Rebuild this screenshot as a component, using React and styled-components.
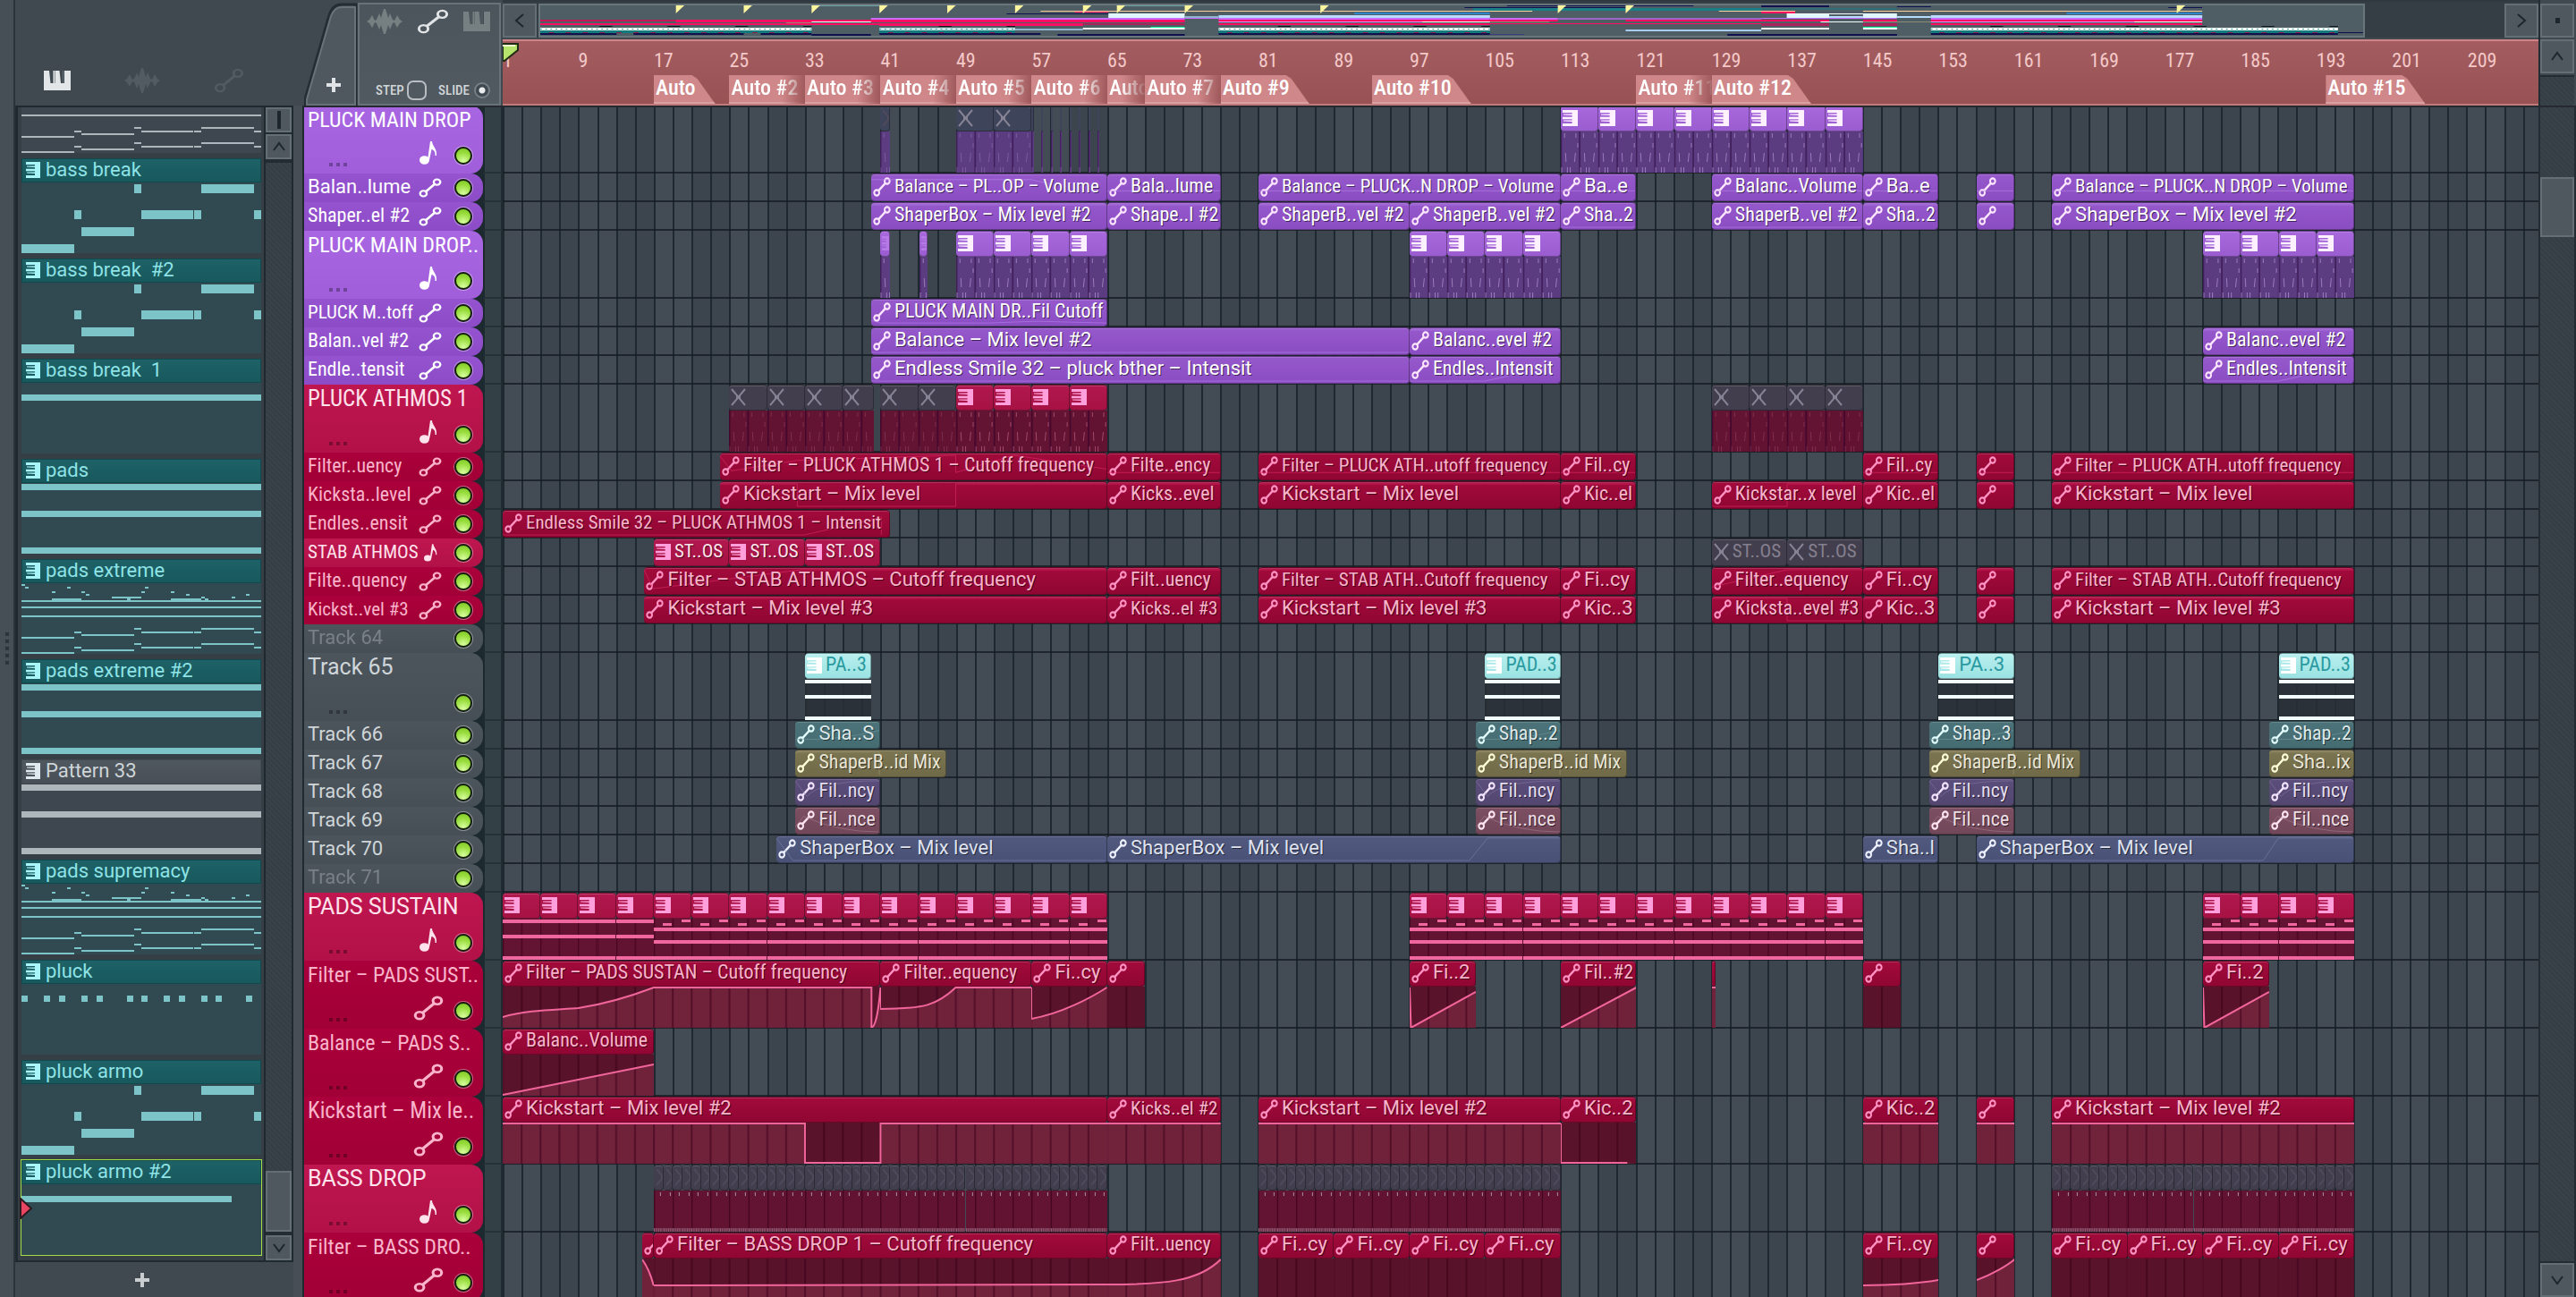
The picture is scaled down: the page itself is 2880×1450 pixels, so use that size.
import React from "react";
import styled, { createGlobalStyle, css } from "styled-components";

const TOTAL_BARS = 215.5;
const BAR_PX = 10.56;
const pct = (bars) => `${(bars / TOTAL_BARS) * 100}%`;

const Global = createGlobalStyle`
  *, *::before, *::after { box-sizing: border-box; }
  body { margin: 0; background: #414950; overflow: hidden; font-family: Roboto, "Liberation Sans", sans-serif; }
  button { font: inherit; color: inherit; background: none; border: 0; padding: 0; display: grid; place-items: center; }
  ul, ol { list-style: none; margin: 0; padding: 0; }
`;

/* ---------- text fitting ---------- */

const estimate = (text, size) => {
  let em = 0;
  for (const c of text) {
    if (/[ijl.I]/.test(c)) em += 0.25;
    else if (/[ftr1 ]/.test(c)) em += 0.33;
    else if (/[mMwW]/.test(c)) em += 0.88;
    else if (/[A-Z]/.test(c)) em += 0.64;
    else em += 0.55;
  }
  return em * size;
};
const CONDENSED = 0.88;
const fit = (text, size, room) => {
  const width = estimate(text, size);
  return { $tight: width > room, $size: width * CONDENSED > room ? size - 1 : size };
};
const family = ({ $tight }) =>
  $tight ? `"Roboto Condensed", Roboto, sans-serif` : `Roboto, "Liberation Sans", sans-serif`;

/* ---------- palettes ---------- */

const themes = {
  purple: { name: "#a966e3, #a05edb", title: "#a768dc, #9a5dd0", text: "#ffffff", icon: "#fff0ff", body: "rgba(97, 58, 140, 0.82)", tick: "#a887c6" },
  violet: { name: "#9553d0, #8c4bc7", title: "#9659cc, #8b4dc2", text: "#ffffff", icon: "#ffe6ff", line: "#b583e8" },
  rose: { name: "#bf1650, #b21147", title: "#b2184e, #a51243", text: "#ffe3ec", icon: "#ff9fdc", body: "rgba(105, 10, 44, 0.84)", tick: "#b05578" },
  crimson: { name: "#ab003b, #a10036", title: "#a20b3c, #900633", text: "#f9b4cb", icon: "#ff93c4", body: "rgba(92, 12, 38, 0.88)", line: "#e02d6c" },
  grey: { name: "#4c555c, #474f56", title: "#b9efef, #9be2e2", text: "#cfd6da", icon: "#ffffff", body: "rgba(40, 47, 54, 0.86)" },
  teal: { title: "#4b7379, #456c71", text: "#dde9ea", icon: "#e4ffff", line: "#74999e" },
  olive: { title: "#7c7551, #716a48", text: "#e8e5d5", icon: "#ffffd8", line: "#9c9673" },
  indigo: { title: "#5b4e7c, #53466f", text: "#e4deee", icon: "#f3e4ff", line: "#8377a3" },
  mauve: { title: "#7c4f62, #724759", text: "#eedfe5", icon: "#ffe4f2", line: "#a57d8d" },
  slate: { title: "#51597f, #495176", text: "#dfe2ef", icon: "#eef1ff", line: "#7b84ab" },
};

/* ---------- icons ---------- */

const AutomationIcon = ({ w = 20, h = 22, c = "currentColor", s = 2.4 }) => (
  <svg width={w} height={h} viewBox="0 0 24 24" preserveAspectRatio="none" fill="none" stroke={c} strokeWidth={s} aria-hidden="true">
    <circle cx="5" cy="19" r="3.4" />
    <circle cx="19" cy="5" r="3.4" />
    <path d="M7.5 16.5 16.5 7.5" strokeWidth={s + 0.4} />
  </svg>
);
const KeysIcon = ({ w = 30, h = 22, c = "currentColor" }) => (
  <svg width={w} height={h} viewBox="0 0 30 22" preserveAspectRatio="none" fill={c} aria-hidden="true">
    <path d="M0 0H6L7.500 14H10.500V0H12.500V14H13V0H17.500L19 14H21.500V0H30V22H0Z" />
    <path d="M21.500 0H23V14H21.500Z" fill="#414950" />
  </svg>
);
const PatternIcon = ({ w = 16, h = 18, c = "currentColor" }) => (
  <svg width={w} height={h} viewBox="0 0 16 18" preserveAspectRatio="none" fill={c} aria-hidden="true">
    <path d="M0 0H16V18H0V15H10V13L1 12.500V11.500H10V10.300H0V7.700H10V6L1 5.500V4.500H10V3H0Z" />
  </svg>
);
const WaveIcon = ({ w = 40, h = 28 }) => (
  <svg width={w} height={h} viewBox="0 0 40 28" fill="currentColor" aria-hidden="true">
    <path d="M0 14 3 12 6 7 9 13 11 12 14 5 16 10 19 0H21L24 10 26 5 29 12 31 13 34 7 37 12 40 14 37 16 34 21 31 15 29 16 26 23 24 18 21 28H19L16 18 14 23 11 16 9 15 6 21 3 16Z" />
  </svg>
);
const NoteIcon = ({ w = 20, h = 26 }) => (
  <svg width={w} height={h} viewBox="0 0 20 26" fill="currentColor" aria-hidden="true">
    <ellipse cx="5.500" cy="21" rx="5.500" ry="4.800" />
    <path d="M9 21 12 0H14C14 5 20 8 19 16L17.500 16C18 11 15 9 13.500 9L11 21Z" />
  </svg>
);
const CrossIcon = ({ c = "#858394" }) => (
  <svg width="17" height="20" viewBox="0 0 17 20" fill="none" stroke={c} strokeWidth="2" aria-hidden="true">
    <path d="M1 1 7 8V12L1 19M16 1 10 8V12L16 19M7 8 10 12M10 8 7 12" />
  </svg>
);
const PlusIcon = () => (
  <svg width="16" height="16" viewBox="0 0 16 16" fill="currentColor" aria-hidden="true">
    <path d="M6 0H10V6H16V10H10V16H6V10H0V6H6Z" />
  </svg>
);
const Chevron = ({ d }) => (
  <svg width="18" height="18" viewBox="0 0 18 18" fill="none" stroke="#1d262c" strokeWidth="2" aria-hidden="true">
    <path d={d} />
  </svg>
);
const UP = "M3 13 9 5 15 13";
const DOWN = "M3 5 9 13 15 5";
const LEFT = "M13 2 5 9 13 16";
const RIGHT = "M5 2 13 9 5 16";

/* ---------- shell ---------- */

const Shell = styled.div`
  display: grid;
  grid-template-columns: 17px 311px 12px minmax(0, 1fr);
  height: 100vh;
  background: #414950;
`;
const Edge = styled.div`
  display: flex;
  flex-direction: column;
  justify-content: center;
  align-items: center;
  gap: 4px;
  background: #464e56;
  border-right: 2px solid #2b343b;
  i { width: 4px; height: 4px; background: #2c3339; }
`;
const Gutter = styled.div`
  margin-top: 118px;
  background: #474e56;
  border-right: 2px solid #1f2930;
`;
const Bevel = styled.button`
  background: #4f585f;
  border: 2px solid #646e75;
  flex: none;
`;
const ScrollTrack = styled.div`
  flex: 1;
  display: flex;
  flex-direction: column;
  justify-content: ${(p) => p.$end || "flex-start"};
  background: repeating-linear-gradient(45deg, #363e45 0 2px, #3a4249 2px 4px);
  border-top: 2px solid #222c32;
  border-bottom: 2px solid #222c32;
`;

/* ---------- pattern browser ---------- */

const Browser = styled.aside`
  display: flex;
  flex-direction: column;
  min-height: 0;
`;
const BrowserTabs = styled.nav`
  display: flex;
  align-items: flex-end;
  gap: 60px;
  height: 118px;
  padding: 0 0 14px 32px;
  color: #525b61;
  button { height: 28px; }
  button:first-child { color: #e3e6e8; }
`;
const BrowserBody = styled.div`
  flex: 1;
  display: flex;
  min-height: 0;
  border: 2px solid #1f2930;
  border-left-width: 3px;
`;
const PatternList = styled.ul`
  flex: 1;
  display: flex;
  flex-direction: column;
  justify-content: flex-end;
  gap: 6px;
  min-width: 0;
  overflow: hidden;
  padding: 0 3px 6px 4px;
  background: #363e46;
`;
const Pattern = styled.li`
  flex: none;
  position: relative;
  background: ${(p) => (p.$grey ? "#3e464f" : "#314a51")};
  color: ${(p) => (p.$grey ? "#adb6bb" : "#7cc4c8")};
  ${(p) => p.$selected && css`box-shadow: 0 0 0 1px #a4dc45;`}
`;
const PatternTitle = styled.div`
  display: flex;
  align-items: center;
  gap: 6px;
  height: 27px;
  padding: 0 0 2px 4px;
  font-size: 22px;
  line-height: 26px;
  color: ${(p) => (p.$grey ? "#ced5d9" : "#8ee3e6")};
  background: ${(p) => (p.$grey ? "linear-gradient(#50585f, #484f56)" : "linear-gradient(#1e6166, #17595d)")};
  border: 1px solid ${(p) => (p.$grey ? "#444c53" : "#0f4a4e")};
  white-space: pre;
`;
const Preview = styled.svg`
  display: block;
  width: 100%;
  height: 79px;
`;
const PlayArrow = styled.svg`
  position: absolute;
  left: -2px;
  bottom: 40px;
`;
const BrowserScroll = styled.div`
  width: 31px;
  display: flex;
  flex-direction: column;
  border-left: 2px solid #1f2930;
  background: #222c32;
  gap: 2px;
  ${Bevel} { height: 28px; }
  ${ScrollTrack} ${Bevel} { height: 68px; }
`;
const AddPattern = styled.button`
  height: 39px;
  margin-right: 28px;
  color: #c9cdd0;
`;

const bassNotes = [[0, 69, 59, 10], [59, 31, 8, 10], [67, 50, 59, 10], [126, 2, 8, 10], [134, 31, 59, 10], [194, 31, 8, 10], [202, 2, 59, 10], [261, 31, 8, 10]];
const chord = [[0, 1, 269, 7], [0, 31, 269, 7], [0, 72, 269, 7]];
const chordSplit = [1, 31, 72].flatMap((y) => [[0, y, 134, 7], [135, y, 134, 7]]);
const extreme = [
  ...[[0, 1], [4, 4], [34, 9], [51, 4], [67, 9], [72, 12], [135, 9], [139, 4], [168, 9], [185, 12], [202, 15], [206, 17], [236, 15], [252, 12], [118, 17]].map(([x, y]) => [x, y, 4, 2]),
  [34, 17, 33, 2], [101, 15, 33, 2], [168, 17, 34, 2],
  ...[19, 26, 36].flatMap((y) => [[0, y, 134, 2], [135, y, 134, 2]]),
  ...[0, 17].flatMap((d) => [[0, 60 + d, 59, 2], [59, 54 + d, 8, 2], [67, 57 + d, 59, 2], [126, 50 + d, 8, 2], [134, 54 + d, 59, 2], [194, 54 + d, 8, 2], [202, 50 + d, 59, 2], [261, 54 + d, 8, 2]]),
];
const pluckNotes = [0, 25, 42, 67, 84, 118, 135, 160, 177, 202, 218, 252].map((x) => [x, 13, 7, 7]);
const patterns = [
  { notes: extreme, grey: true },
  { name: "bass break", notes: bassNotes },
  { name: "bass break  #2", notes: bassNotes },
  { name: "bass break  1", notes: [[0, 13, 269, 7]] },
  { name: "pads", notes: chord },
  { name: "pads extreme", notes: extreme },
  { name: "pads extreme #2", notes: chordSplit },
  { name: "Pattern 33", notes: chordSplit, grey: true },
  { name: "pads supremacy", notes: extreme },
  { name: "pluck", notes: pluckNotes },
  { name: "pluck armo", notes: bassNotes },
  { name: "pluck armo #2", notes: [[0, 13, 236, 7]], selected: true },
];

function PatternBrowser() {
  return (
    <Browser>
      <BrowserTabs>
        <button aria-label="Patterns"><KeysIcon /></button>
        <button aria-label="Audio"><WaveIcon /></button>
        <button aria-label="Automation"><AutomationIcon w={34} h={28} s={2} /></button>
      </BrowserTabs>
      <BrowserBody>
        <PatternList>
          {patterns.map((p, i) => (
            <Pattern key={i} $grey={p.grey} $selected={p.selected}>
              {p.name && (
                <PatternTitle $grey={p.grey}>
                  <PatternIcon c={p.grey ? "#dfe9f0" : "#a9f6fa"} />
                  {p.name}
                </PatternTitle>
              )}
              <Preview viewBox="0 0 269 79" preserveAspectRatio="none" fill="currentColor" shapeRendering="crispEdges">
                {p.notes.map(([x, y, w, h], n) => <rect key={n} x={x} y={y} width={w} height={h} />)}
              </Preview>
              {p.selected && (
                <PlayArrow width="15" height="24" viewBox="0 0 15 24"><path d="M1 1 13 12 1 23Z" fill="#ea4663" stroke="#2b1a20" strokeWidth="2" /></PlayArrow>
              )}
            </Pattern>
          ))}
        </PatternList>
        <BrowserScroll>
          <Bevel aria-label="Lock">
            <svg width="4" height="20"><rect width="4" height="20" fill="#1d262c" /></svg>
          </Bevel>
          <Bevel aria-label="Scroll up"><Chevron d={UP} /></Bevel>
          <ScrollTrack $end="flex-end"><Bevel as="div" /></ScrollTrack>
          <Bevel aria-label="Scroll down"><Chevron d={DOWN} /></Bevel>
        </BrowserScroll>
      </BrowserBody>
      <AddPattern aria-label="Add pattern"><PlusIcon /></AddPattern>
    </Browser>
  );
}

/* ---------- playlist header ---------- */

const Playlist = styled.main`
  display: flex;
  flex-direction: column;
  min-height: 0;
  min-width: 0;
`;
const Head = styled.header`
  flex: none;
  display: grid;
  grid-template-columns: 222px minmax(0, 1fr) 42px;
  grid-template-rows: 44px 74px;
  height: 120px;
  border-bottom: 2px solid #26292f;
`;
const Tools = styled.div`
  grid-row: 1 / 3;
  display: grid;
  grid-template-columns: 60px 1fr;
  padding-top: 3px;
`;
const AddTrack = styled.button`
  position: relative;
  color: #e1e4e6;
  padding: 68px 0 0 6px;
  > svg:first-child { position: absolute; inset: 0; width: 100%; height: 100%; }
  > svg:last-child { position: relative; }
`;
const ToolBox = styled.div`
  display: flex;
  flex-direction: column;
  justify-content: space-between;
  background: linear-gradient(#4c555c, #525a61);
  border: 2px solid #68727a;
  margin-right: 2px;
  padding: 5px 10px 4px 8px;
`;
const ToolRow = styled.div`
  display: flex;
  align-items: center;
  justify-content: space-between;
  color: #767f81;
  button:nth-child(2) { color: #e1e4e6; }
`;
const OptionRow = styled(ToolRow)`
  padding-left: 10px;
`;
const Option = styled.label`
  display: flex;
  align-items: center;
  gap: 3px;
  font: 500 15px/20px "Roboto Condensed", Roboto, sans-serif;
  color: #d0d5d8;
`;
const StepBox = styled.input`
  appearance: none;
  margin: 0;
  width: 22px;
  height: 22px;
  border: 2px solid #b8bec2;
  border-radius: 7px;
`;
const SlideDot = styled.input`
  appearance: none;
  margin: 0 0 0 2px;
  width: 18px;
  height: 18px;
  border: 2px solid #767f85;
  border-radius: 50%;
  background: radial-gradient(circle, #e9ecee 0 3px, #3f484f 4px);
`;

function HeadTools() {
  return (
    <Tools>
      <AddTrack aria-label="Add">
        <svg viewBox="0 0 60 115" preserveAspectRatio="none" aria-hidden="true">
          <path d="M1 115V108L28 14Q32 2 42 2H58V115Z" fill="#4f585f" stroke="#242d34" strokeWidth="3" />
          <path d="M3 115V108L30 15Q34 5 42 5H57V114H3" fill="none" stroke="#68727a" strokeWidth="2" />
        </svg>
        <PlusIcon />
      </AddTrack>
      <ToolBox>
        <ToolRow>
          <button aria-label="Audio clips"><WaveIcon /></button>
          <button aria-label="Automation clips"><AutomationIcon w={36} h={28} s={2} /></button>
          <button aria-label="Pattern clips"><KeysIcon /></button>
        </ToolRow>
        <OptionRow>
          <Option>STEP<StepBox type="checkbox" /></Option>
          <Option>SLIDE<SlideDot type="radio" /></Option>
        </OptionRow>
      </ToolBox>
    </Tools>
  );
}

const MapRow = styled.div`
  display: flex;
  gap: 2px;
  height: 42px;
  padding-top: 2px;
  background: #353e45;
  border-top: 2px solid #30393f;
  ${Bevel} { width: 38px; }
`;
const MapTrack = styled.div`
  flex: 1;
  display: flex;
`;
const MapWindow = styled.div`
  flex: 0 0 93%;
  background: #4f5e65;
  border: 2px solid #68757b;
  svg { display: block; width: 100%; height: 34px; }
`;

const P = "#c96bff", R = "#ff0f62", W = "#f4fffc", T = "#157a7c", N = "#10104e", LB = "#b8dcff", PE = "#ffcf9a", BL = "#2e86c8", G = "#19ffa0", M = "#a8245a", DT = "#1b7f86", K = "#101820", MIST = "#dff6ff", KHAKI = "#8f8a74";
const mapBands = [
  [1, 17, 16, 2, "#c01a58"], [1, 65, 20, 2, R], [17, 65, 16, 3, R], [65, 77, 16, 3, R],
  [1, 33, 25, 3, W], [1, 33, 28, 3, T], [1, 10, 31, 2, N], [12, 25, 31, 2, N], [27, 33, 31, 2, N], [33, 40, 32, 2, N],
  [33, 40, 18, 1, W], [30, 33, 19, 1, KHAKI], [40, 77, 14, 2, P], [41, 65, 20, 3, R],
  [41, 57, 25, 3, "#c9e6e6"], [41, 57, 28, 3, T], [41, 60, 31, 2, N], [57, 65, 26, 2, "#8fb4d0"], [62, 77, 32, 2, N],
  [65, 77, 20, 2, M], [65, 77, 25, 2, W], [73, 77, 24, 1, G], [68, 77, 9, 5, MIST], [60, 81, 6, 1, PE], [64, 68, 7, 1, R], [56, 68, 9, 1, N], [33, 41, 0, 1, "#6fa5a8"], [69, 77, 0, 1, "#6fa5a8"],
  [81, 113, 6, 1, PE], [97, 113, 8, 2, BL], [81, 113, 11, 3, LB], [81, 113, 14, 2, P], [81, 113, 16, 2, R], [81, 113, 18, 1, "#e090ff"], [81, 113, 20, 2, R], [105, 113, 18, 1, W],
  [81, 113, 25, 3, W], [81, 113, 28, 3, T], [81, 113, 31, 2, N], [113, 117, 32, 1, "#3b3f80"], [77, 81, 12, 2, "#8fb4d0"], [77, 81, 14, 1, P],
  [111, 145, 3, 3, DT], [110, 129, 2, 1, N], [115, 137, 0, 1, N], [113, 118, 6, 1, PE], [113, 121, 14, 2, P], [121, 145, 14, 2, "#9a67c8"], [113, 121, 16, 2, R], [129, 145, 16, 2, R], [113, 145, 20, 1, R], [129, 145, 27, 2, "#a9cdee"], [113, 120, 18, 1, KHAKI],
  [145, 153, 0, 2, N], [145, 161, 3, 2, "#2f6f75"], [140, 149, 6, 1, PE], [145, 149, 7, 2, R], [148, 157, 9, 1, W], [148, 153, 10, 4, MIST], [145, 161, 14, 1, P], [145, 153, 16, 2, R], [145, 153, 20, 3, M], [145, 153, 25, 2, W], [141, 161, 32, 2, N], [153, 157, 12, 2, LB], [152, 157, 18, 1, W],
  [157, 165, 6, 1, PE], [157, 161, 9, 5, MIST], [157, 161, 16, 2, R], [157, 161, 20, 3, M], [157, 161, 24, 1, G], [157, 161, 25, 2, W], [161, 165, 12, 2, LB], [157, 168, 18, 1, KHAKI], [161, 165, 1, 1, N],
  [165, 197, 6, 1, PE], [181, 197, 8, 2, BL], [165, 197, 11, 3, LB], [165, 197, 14, 2, P], [165, 197, 16, 2, R], [165, 197, 18, 1, "#e090ff"], [165, 197, 20, 2, R], [189, 197, 18, 1, W],
  [165, 213, 25, 3, W], [165, 213, 28, 3, T], [165, 213, 31, 2, N], [213, 216, 30, 1, N], [193, 197, 2, 1, N],
];
const mapDots = [[1, 33], [41, 57], [81, 113], [165, 213]];
const mapMarks = [17, 25, 33, 41, 49, 57, 65, 69, 77, 93, 121, 129, 194];

function MiniMap() {
  return (
    <MapRow>
      <Bevel aria-label="Scroll left"><Chevron d={LEFT} /></Bevel>
      <MapTrack>
        <MapWindow>
          <svg viewBox="1 0 215 34" preserveAspectRatio="none" aria-hidden="true">
            {mapBands.map(([a, b, y, h, c], i) => <rect key={i} x={a} y={y} width={b - a} height={h} fill={c} />)}
            {mapDots.map(([a, b]) => (
              <g key={a} strokeWidth="1">
                <path d={`M${a} 26.500H${b}`} stroke="#3b8f90" strokeDasharray="0.2 0.4" />
                <path d={`M${a + 7} 23.500H${b}`} stroke={K} strokeDasharray="1.5 6.5" />
                <path d={`M${a + 1} 30.500H${b}`} stroke="#8c1f4c" strokeDasharray="0.6 1.4" />
              </g>
            ))}
            {mapMarks.map((m) => <path key={m} d={`M${m} 0h1l-1 9z`} fill="#fff6a0" />)}
          </svg>
        </MapWindow>
      </MapTrack>
      <Bevel aria-label="Scroll right"><Chevron d={RIGHT} /></Bevel>
    </MapRow>
  );
}

const Corner = styled.div`
  grid-row: 1 / 3;
  grid-column: 3;
  display: flex;
  flex-direction: column;
  gap: 2px;
  padding: 4px 2px 0 2px;
  background: linear-gradient(#222c32, #222c32) left / 2px 100% no-repeat;
  ${Bevel} { height: 38px; }
  ${ScrollTrack} { border-bottom: 0; }
`;
const Ruler = styled.div`
  grid-column: 2;
  position: relative;
  overflow: hidden;
  background: linear-gradient(#a35d60, #985254);
  border-top: 2px solid #cf8486;
  border-bottom: 2px solid #c07a7b;
`;
const RulerNumber = styled.span`
  position: absolute;
  top: 10px;
  font: 22px/24px "Roboto Condensed", Roboto, sans-serif;
  color: #f5c9c9;
`;
const Marker = styled.span`
  position: absolute;
  bottom: 0;
  height: 32px;
  padding: 0 22px 0 2px;
  overflow: hidden;
  white-space: nowrap;
  font: 500 24px/28px "Roboto Condensed", Roboto, sans-serif;
  color: #fff;
  background: #cf8789;
  border-bottom: 2px solid #dba0a0;
  ${(p) =>
    p.$cut
      ? css`padding-right: 0; mask-image: linear-gradient(90deg, #000 calc(100% - 26px), rgba(0, 0, 0, 0.1));`
      : css`clip-path: polygon(0 0, calc(100% - 26px) 0, calc(100% - 20px) 4px, 100% 100%, 0 100%);`}
`;
const PlayHead = styled.svg`
  position: absolute;
  left: 0;
  top: 2px;
`;
const markers = [
  [17, "Auto"], [25, "Auto #2", 8], [33, "Auto #3", 8], [41, "Auto #4", 8], [49, "Auto #5", 8], [57, "Auto #6", 8],
  [65, "Auto", 4], [69, "Auto #7", 8], [77, "Auto #9"], [93, "Auto #10"], [121, "Auto #11", 8], [129, "Auto #12"], [194, "Auto #15"],
];
const numbers = Array.from({ length: 27 }, (_, i) => 1 + i * 8);

/* ---------- tracks ---------- */

const TrackArea = styled.div`
  flex: 1;
  display: flex;
  min-height: 0;
`;
const Stage = styled.div`
  flex: 1;
  position: relative;
  min-width: 0;
  overflow: hidden;
  display: flex;
  flex-direction: column;
  background: #1c2a30;
`;
const GridLines = styled.div`
  position: absolute;
  inset: 0 0 0 222px;
  display: flex;
  overflow: hidden;
  background: #424a53;
`;
const GridCell = styled.i`
  flex: 0 0 ${pct(2)};
  border-left: 2px solid #1e2831;
  background: #434b54;
  &:nth-child(4n + 3), &:nth-child(4n + 4) { background: #3c454d; }
`;
const Tracks = styled.ol`
  position: relative;
  margin-top: -2px;
`;
const Track = styled.li`
  display: grid;
  grid-template-columns: 200px 22px minmax(0, 1fr);
  height: ${(p) => (p.$tall ? 76 : 32)}px;
`;
const Title = styled.strong`
  font-weight: 400;
  font-family: ${family};
  font-size: ${(p) => p.$size}px;
  line-height: 28px;
  white-space: nowrap;
  opacity: ${(p) => (p.$dim ? 0.35 : 1)};
`;
const Led = styled.input`
  appearance: none;
  margin: 0;
  justify-self: center;
  grid-column: 3;
  width: 20px;
  height: 20px;
  border-radius: 50%;
  border: 2px solid #14210e;
  background: radial-gradient(circle at 50% 90%, #d9ffa0, #97dc3b 60%, #7cc625);
  box-shadow: 0 0 0 1px rgba(255, 255, 255, 0.4);
`;
const Grip = styled.i`
  align-self: end;
  display: flex;
  gap: 4px;
  padding: 0 0 8px 24px;
  &::before, &::after, b { content: ""; width: 4px; height: 4px; background: rgba(0, 0, 0, 0.3); }
`;
const TrackName = styled.div`
  display: grid;
  grid-template-columns: minmax(0, 1fr) 30px 44px;
  align-items: center;
  padding-left: 4px;
  border-radius: 0 14px 14px 0;
  color: ${(p) => themes[p.$tone].text};
  background: linear-gradient(${(p) => themes[p.$tone].name});
  > svg { justify-self: center; }
  ${(p) =>
    p.$tall
      ? css`
          grid-template-columns: minmax(0, 1fr) 34px 44px;
          grid-template-rows: 32px 1fr;
          ${Title} { grid-column: 1 / 4; }
          ${Led} { align-self: end; margin-bottom: 10px; }
          > svg { align-self: center; margin-bottom: 2px; }
        `
      : css`
          ${Title} { padding-bottom: 2px; }
        `}
`;
const Strip = styled.div`
  background: #334147;
  border-right: 2px solid #1f2b31;
  border-left: 2px solid #1c2a30;
  border-bottom: 2px solid #25323a;
`;
const Lane = styled.div`
  position: relative;
  overflow: hidden;
  box-shadow: inset 0 -2px 0 rgba(22, 28, 35, 0.8);
`;
const Clip = styled.div`
  position: absolute;
  top: 0;
  bottom: 1px;
  min-width: 2px;
  overflow: hidden;
  display: flex;
  flex-direction: column;
  border-radius: 4px 4px 0 0;
`;
const ClipTitle = styled.div`
  flex: ${(p) => (p.$tall ? "0 0 29px" : "1")};
  position: relative;
  display: flex;
  align-items: center;
  gap: 4px;
  overflow: hidden;
  padding: 0 0 2px 2px;
  border-radius: 4px;
  border: 1px solid rgba(0, 0, 0, 0.32);
  border-left-width: 0;
  box-shadow: inset 0 1px 0 rgba(255, 255, 255, 0.16);
  background: ${(p) => (p.$muted ? (p.$tone === "purple" ? "#3e445a" : "#423e4d") : `linear-gradient(${themes[p.$tone].title})`)};
  > svg { flex: none; }
`;
const ClipText = styled.span`
  position: relative;
  padding-bottom: 2px;
  font-family: ${family};
  font-size: ${(p) => p.$size}px;
  line-height: 26px;
  white-space: nowrap;
  color: ${(p) => (p.$muted ? "#85808f" : p.$color)};
  text-shadow: ${(p) => (p.$flat ? "none" : "1px 1px 0 rgba(0, 0, 0, 0.55)")};
`;
const Body = styled.div`
  height: 46px;
  background: ${(p) => p.$bg};
  svg { display: block; width: 100%; height: 46px; }
`;
const Trace = styled.svg`
  position: absolute;
  inset: 0;
  width: 100%;
  height: 100%;
`;

const tickPath = (bars) => {
  let d = "";
  for (let b = 0; b < bars; b += 2) {
    const x = b * 10;
    d += `M${x + 4} 2V7M${x + 16} 2V7M${x + 18} 13V18M${x + 5} 24L${x + 5.5} 34M${x + 14.5} 34L${x + 15.5} 24M${x + 1} 40V46M${x + 7} 40V46M${x + 10} 40V46`;
  }
  return d;
};
const seps = (bars) => {
  let d = "";
  for (let b = 2; b < bars; b += 2) d += `M${b * 10} 0V46`;
  return d;
};

function ClipBody({ kind, bars, tone, start, path, muted: isMuted }) {
  const t = themes[tone];
  if (kind === "ticks")
    return (
      <svg viewBox={`0 0 ${bars * 10} 46`} preserveAspectRatio="none" fill="none">
        <path d={`M0.500 0V46${seps(bars)}`} stroke="rgba(40,0,50,.45)" strokeWidth="1.500" />
        <path d={tickPath(bars)} stroke={t.tick} strokeWidth="1" opacity={isMuted ? 0.4 : 0.8} />
      </svg>
    );
  if (kind === "bass")
    return (
      <svg viewBox="0 0 10 46" preserveAspectRatio="none">
        {start % 2 === 1 && <path d="M0.500 0V46" stroke="#45061f" strokeWidth="1" />}
        <path d="M7 2V6" stroke="#a58c9b" strokeWidth="1" />
        <path d="M0 44H10" stroke="#8e5c74" strokeWidth="4" strokeDasharray="1 0.6" />
      </svg>
    );
  if (kind === "pads" || kind === "white") {
    const plain = kind === "white" || start < 17;
    const ys = plain ? [1, 18, 42] : [10, 24, 42];
    return (
      <svg viewBox="0 0 100 46" preserveAspectRatio="none" fill={kind === "white" ? "#f2fdfd" : "#f067a0"} shapeRendering="crispEdges">
        {!(kind === "white") && <path d="M50 0V46M1 0V46" stroke="#45061f" strokeWidth="2" />}
        {ys.map((y) => <rect key={y} y={y} width="100" height="4" />)}
        {!plain && <path d="M24 5H48V8H24ZM74 1H98V4H74Z" />}
      </svg>
    );
  }
  const cells = [];
  for (let b = 2; b < bars; b += 2) cells.push(`M${(b / bars) * 100} 0V46`);
  return (
    <svg viewBox="0 0 100 46" preserveAspectRatio="none">
      {path && <path d={`${path}L100 46L0 46Z`} fill="rgba(255,120,160,.15)" />}
      <path d={cells.join("")} stroke="rgba(60,0,25,.5)" strokeWidth="2" vectorEffect="non-scaling-stroke" />
      {path && <path d={path} fill="none" stroke="#f2659b" strokeWidth="2" vectorEffect="non-scaling-stroke" />}
    </svg>
  );
}

function ClipIcon({ auto, muted: isMuted, bars, color }) {
  if (isMuted) return <CrossIcon c={bars < 3 ? "#4d4a5b" : undefined} />;
  if (auto) return bars >= 1 ? <AutomationIcon c={color} /> : null;
  return bars > 3 ? <PatternIcon w={17} h={18} c={color} /> : <PatternIcon w={8} h={16} c="#b57ae6" />;
}

function ClipView({ clip, track }) {
  const [start, end, text, opt = {}] = clip;
  const { tall, body } = track;
  const tone = track.clipTone || track.tone;
  const t = themes[tone];
  const auto = track.kind === "auto";
  const bars = end - start;
  const room = bars * BAR_PX - 26;
  const white = body === "white";
  return (
    <Clip style={{ left: pct(start - 1), width: pct(bars) }}>
      <ClipTitle $tall={tall} $tone={tone} $muted={opt.muted}>
        {auto && !tall && (
          <Trace viewBox="0 0 100 30" preserveAspectRatio="none">
            <path d={opt.line || track.line} fill="none" stroke={t.line} strokeOpacity="0.6" strokeWidth="1" vectorEffect="non-scaling-stroke" />
          </Trace>
        )}
        <ClipIcon auto={auto} muted={opt.muted} bars={bars} color={t.icon} />
        {text && (
          <ClipText {...fit(text, 22, room)} $muted={opt.muted} $flat={white || opt.muted} $color={white ? "#2a9aa0" : t.text}>
            {text}
          </ClipText>
        )}
      </ClipTitle>
      {tall && (
        <Body $bg={t.body}>
          <ClipBody kind={body} bars={bars} tone={tone} start={start} path={opt.path} muted={opt.muted} />
        </Body>
      )}
    </Clip>
  );
}

const fill = (from, to, step = 4, opt) => {
  const out = [];
  for (let b = from; b < to; b += step) out.push([b, Math.min(b + step, to), "", opt]);
  return out;
};
const muted = { muted: true };
const TOP = "M0 2H100", MID = "M0 19H100", LOW = "M0 28H100";
const flat = { path: "M0 1H100" };
const ramp = { path: "M0 1L2 46L100 6" };

const tracks = [
  { name: "PLUCK MAIN DROP", tone: "purple", tall: true, body: "ticks", clips: [[41, 42, "", muted], ...fill(49, 57, 4, muted), ...Array.from({ length: 8 }, (_, i) => [57 + i, 57.2 + i, "", muted]), ...fill(113, 145)] },
  { name: "Balan..lume", tone: "violet", kind: "auto", line: MID, clips: [[40, 65, "Balance – PL..OP – Volume", { line: "M0 6H68L76 11" }], [65, 77, "Bala..lume"], [81, 113, "Balance – PLUCK..N DROP – Volume"], [113, 121, "Ba..e"], [129, 145, "Balanc..Volume"], [145, 153, "Ba..e"], [157, 161], [165, 197, "Balance – PLUCK..N DROP – Volume"]] },
  { name: "Shaper..el #2", tone: "violet", kind: "auto", line: TOP, clips: [[40, 65, "ShaperBox – Mix level #2"], [65, 77, "Shape..l #2"], [81, 97, "ShaperB..vel #2"], [97, 113, "ShaperB..vel #2"], [113, 121, "Sha..2", { line: LOW }], [129, 145, "ShaperB..vel #2", { line: LOW }], [145, 153, "Sha..2"], [157, 161], [165, 197, "ShaperBox – Mix level #2"]] },
  { name: "PLUCK MAIN DROP..", tone: "purple", tall: true, body: "ticks", clips: [[41, 42], [45.1, 46], ...fill(49, 65), ...fill(97, 113), ...fill(181, 197)] },
  { name: "PLUCK M..toff", tone: "violet", kind: "auto", line: "M0 24L4 27H50L70 25L100 27", clips: [[40, 65, "PLUCK MAIN DR..Fil Cutoff"]] },
  { name: "Balan..vel #2", tone: "violet", kind: "auto", line: LOW, clips: [[40, 97, "Balance – Mix level #2"], [97, 113, "Balanc..evel #2", { line: TOP }], [181, 197, "Balanc..evel #2", { line: TOP }]] },
  { name: "Endle..tensit", tone: "violet", kind: "auto", line: LOW, clips: [[40, 97, "Endless Smile 32 – pluck bther – Intensit"], [97, 113, "Endles..Intensit", { line: "M0 28H50L66 22" }], [181, 197, "Endles..Intensit", { line: "M0 28H50L66 22" }]] },
  { name: "PLUCK ATHMOS 1", tone: "rose", tall: true, body: "ticks", clips: [...fill(25, 40.3, 4, muted), ...fill(41, 49, 4, muted), ...fill(49, 65), ...fill(129, 145, 4, muted)] },
  { name: "Filter..uency", tone: "crimson", kind: "auto", line: "M0 22H100", clips: [[24, 65, "Filter – PLUCK ATHMOS 1 – Cutoff frequency", { line: "M0 3L3 20L20 8L61 2V22L76 2L100 18" }], [65, 77, "Filte..ency"], [81, 113, "Filter – PLUCK ATH..utoff frequency"], [113, 121, "Fil..cy"], [145, 153, "Fil..cy"], [157, 161], [165, 197, "Filter – PLUCK ATH..utoff frequency"]] },
  { name: "Kicksta..level", tone: "crimson", kind: "auto", line: TOP, clips: [[24, 65, "Kickstart – Mix level", { line: "M0 2H20V28H61V2H100" }], [65, 77, "Kicks..evel"], [81, 113, "Kickstart – Mix level"], [113, 121, "Kic..el"], [129, 145, "Kickstar..x level", { line: "M0 28H50V2H100" }], [145, 153, "Kic..el"], [157, 161], [165, 197, "Kickstart – Mix level"]] },
  { name: "Endles..ensit", tone: "crimson", kind: "auto", line: "M0 28H78L98 8V28", clips: [[1, 42, "Endless Smile 32 – PLUCK ATHMOS 1 – Intensit"]] },
  { name: "STAB ATHMOS", tone: "rose", clips: [[17, 25, "ST..OS"], [25, 33, "ST..OS"], [33, 41, "ST..OS"], [129, 137, "ST..OS", muted], [137, 145, "ST..OS", muted]] },
  { name: "Filte..quency", tone: "crimson", kind: "auto", line: TOP, clips: [[16, 65, "Filter – STAB ATHMOS – Cutoff frequency", { line: "M0 2L2 24L34 2H100" }], [65, 77, "Filt..uency"], [81, 113, "Filter – STAB ATH..Cutoff frequency"], [113, 121, "Fi..cy"], [129, 145, "Filter..equency", { line: "M0 22L50 2H100" }], [145, 153, "Fi..cy"], [157, 161], [165, 197, "Filter – STAB ATH..Cutoff frequency"]] },
  { name: "Kickst..vel #3", tone: "crimson", kind: "auto", line: TOP, clips: [[16, 65, "Kickstart – Mix level #3"], [65, 77, "Kicks..el #3"], [81, 113, "Kickstart – Mix level #3"], [113, 121, "Kic..3"], [129, 145, "Kicksta..evel #3", { line: "M0 2H50V28H100" }], [145, 153, "Kic..3"], [157, 161], [165, 197, "Kickstart – Mix level #3"]] },
  { name: "Track 64", tone: "grey", plain: true, dim: true, clips: [] },
  { name: "Track 65", tone: "grey", plain: true, tall: true, body: "white", clips: [[33, 40, "PA..3"], [105, 113, "PAD..3"], [153, 161, "PA..3"], [189, 197, "PAD..3"]] },
  { name: "Track 66", tone: "grey", clipTone: "teal", plain: true, kind: "auto", line: "M0 20Q50 22 100 10", clips: [[32, 41, "Sha..S"], [104, 113, "Shap..2"], [152, 161, "Shap..3"], [188, 197, "Shap..2"]] },
  { name: "Track 67", tone: "grey", clipTone: "olive", plain: true, kind: "auto", line: TOP, clips: [[32, 48, "ShaperB..id Mix", { line: "M0 2H56V28" }], [104, 120, "ShaperB..id Mix", { line: "M0 2H56V28" }], [152, 168, "ShaperB..id Mix", { line: "M0 2H56V28" }], [188, 197, "Sha..ix"]] },
  { name: "Track 68", tone: "grey", clipTone: "indigo", plain: true, kind: "auto", line: "M0 2L14 20Q30 2 100 2", clips: [32, 104, 152, 188].map((b) => [b, b + 9, "Fil..ncy"]) },
  { name: "Track 69", tone: "grey", clipTone: "mauve", plain: true, kind: "auto", line: "M0 22L10 10Q50 28 100 28", clips: [32, 104, 152, 188].map((b) => [b, b + 9, "Fil..nce"]) },
  { name: "Track 70", tone: "grey", clipTone: "slate", plain: true, kind: "auto", line: LOW, clips: [[30, 65, "ShaperBox – Mix level", { line: "M0 2L5 28H100" }], [65, 113, "ShaperBox – Mix level", { line: "M0 28H80L84 2H100" }], [145, 153, "Sha..l"], [157, 197, "ShaperBox – Mix level", { line: "M0 28H76L80 2H100" }]] },
  { name: "Track 71", tone: "grey", plain: true, dim: true, clips: [] },
  { name: "PADS SUSTAIN", tone: "rose", tall: true, body: "pads", clips: [...fill(1, 65), ...fill(97, 145), ...fill(181, 197)] },
  { name: "Filter – PADS SUST..", tone: "crimson", kind: "auto", tall: true, clips: [[1, 41, "Filter – PADS SUSTAN – Cutoff frequency", { path: "M0 34C6 26 14 26 20 24C28 19 35 9 40 1H97.6V46C99 44 99.6 20 100 1" }], [41, 57, "Filter..equency", { path: "M0 1V25C30 25 38 20 50 1H100" }], [57, 65, "Fi..cy", { path: "M0 1V36C40 30 80 12 100 1" }], [65, 69], [97, 104, "Fi..2", ramp], [113, 121, "Fil..#2", { path: "M0 46L100 1" }], [129, 129.4, "", flat], [145, 149], [181, 188, "Fi..2", ramp]] },
  { name: "Balance – PADS S..", tone: "crimson", kind: "auto", tall: true, clips: [[1, 17, "Balanc..Volume", { path: "M0 45L100 11" }]] },
  { name: "Kickstart – Mix le..", tone: "crimson", kind: "auto", tall: true, clips: [[1, 65, "Kickstart – Mix level #2", { path: "M0 1H50V45H62.5V1H100" }], [65, 77, "Kicks..el #2", flat], [81, 113, "Kickstart – Mix level #2", flat], [113, 121, "Kic..2", { path: "M0 1V45H88" }], [145, 153, "Kic..2", flat], [157, 161, "", flat], [165, 197, "Kickstart – Mix level #2", flat]] },
  { name: "BASS DROP", tone: "rose", tall: true, body: "bass", clips: [...fill(17, 65, 1, muted), ...fill(81, 113, 1, muted), ...fill(165, 197, 1, muted)] },
  { name: "Filter – BASS DRO..", tone: "crimson", kind: "auto", tall: true, clips: [[15.8, 17, "", { path: "M0 1C40 8 80 20 100 30" }], [17, 65, "Filter – BASS DROP 1 – Cutoff frequency", { path: "M0 30L100 29" }], [65, 77, "Filt..uency", { path: "M0 29C50 29 80 26 100 1" }], ...[81, 89, 97, 105].map((b) => [b, b + 8, "Fi..cy"]), [145, 153, "Fi..cy", { path: "M0 30C40 30 80 27 100 24" }], [157, 161, "", { path: "M0 24C40 18 80 8 100 1" }], ...[165, 173, 181, 189].map((b) => [b, b + 8, "Fi..cy"])] },
];

function TrackRow({ track }) {
  const { name, tone, tall, kind, plain, dim } = track;
  const icon =
    kind === "auto"
      ? <AutomationIcon w={tall ? 34 : 26} h={tall ? 28 : 22} s={2.2} />
      : <NoteIcon w={tall ? 20 : 15} h={tall ? 26 : 20} />;
  return (
    <Track $tall={tall}>
      <TrackName $tall={tall} $tone={tone}>
        <Title $dim={dim} {...(tall ? fit(name, 25, 190) : fit(name, 22, 118))}>{name}</Title>
        {tall && <Grip><b /></Grip>}
        {!plain && icon}
        <Led type="checkbox" defaultChecked aria-label={name} />
      </TrackName>
      <Strip />
      <Lane>
        {track.clips.map((c, i) => <ClipView key={i} clip={c} track={track} />)}
      </Lane>
    </Track>
  );
}

const SideScroll = styled.div`
  width: 42px;
  display: flex;
  flex-direction: column;
  padding: 0 2px;
  background: #222c32;
  ${Bevel} { height: 38px; }
  ${ScrollTrack} { border-top: 0; padding-top: 78px; }
  ${ScrollTrack} ${Bevel} { height: 67px; }
`;

export default function App() {
  return (
    <>
      <Global />
      <Shell>
        <Edge>{[0, 1, 2, 3, 4].map((i) => <i key={i} />)}</Edge>
        <PatternBrowser />
        <Gutter />
        <Playlist>
          <Head>
            <HeadTools />
            <MiniMap />
            <Corner>
              <Bevel aria-label="Options"><svg width="5" height="6"><rect width="5" height="6" fill="#1d262c" /></svg></Bevel>
              <Bevel aria-label="Scroll up"><Chevron d={UP} /></Bevel>
              <ScrollTrack />
            </Corner>
            <Ruler>
              {numbers.map((n) => <RulerNumber key={n} style={{ left: pct(n - 1) }}>{n}</RulerNumber>)}
              {markers.map(([b, text, span]) => (
                <Marker key={b} $cut={!!span} style={{ left: pct(b - 1), width: span ? pct(span) : undefined }}>{text}</Marker>
              ))}
              <PlayHead width="20" height="22" viewBox="0 0 20 22"><path d="M0 1H17V8L2 20H0Z" fill="#b5e36b" stroke="#1f2c14" strokeWidth="2" /><path d="M0 3H14" stroke="#f1ffd0" strokeWidth="2" /></PlayHead>
            </Ruler>
          </Head>
          <TrackArea>
            <Stage>
              <GridLines>{Array.from({ length: 108 }, (_, i) => <GridCell key={i} />)}</GridLines>
              <Tracks>{tracks.map((t) => <TrackRow key={t.name} track={t} />)}</Tracks>
            </Stage>
            <SideScroll>
              <ScrollTrack><Bevel as="div" /></ScrollTrack>
              <Bevel aria-label="Scroll down"><Chevron d={DOWN} /></Bevel>
            </SideScroll>
          </TrackArea>
        </Playlist>
      </Shell>
    </>
  );
}
